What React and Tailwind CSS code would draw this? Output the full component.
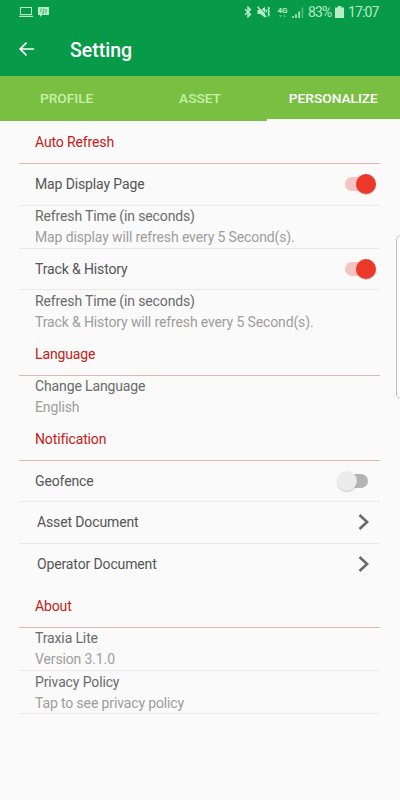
import { useState } from "react";

const tabs = ["PROFILE", "ASSET", "PERSONALIZE"];

function StatusBar() {
  return (
    <div className="flex h-6 items-center justify-between pl-[19px] pr-[21px] text-[#b5edc6]">
      <div className="flex items-center gap-[5px]">
        <svg width="14" height="10" viewBox="0 0 14 10" fill="none" stroke="currentColor">
          <rect x="1.5" y="0.5" width="11" height="7" />
          <path d="M0 9.4h14" strokeWidth="1.2" />
        </svg>
        <svg width="11" height="10" viewBox="0 0 11 10" fill="currentColor">
          <path d="M0 0h11v8H4L2 10V8H0z" />
          <path
            d="M2.4 2.3h1.4M5 2.3h1.4M7.5 3.1h1.4M2.1 4.2h1.4M4.7 4.2h1.4M4.4 6.1h1.4M7 5h1.4"
            stroke="#2f9c55"
            strokeWidth="1.1"
          />
        </svg>
      </div>
      <div className="flex items-center">
        <svg width="8" height="12" viewBox="0 0 8 12" fill="none" stroke="currentColor" strokeWidth="1.4">
          <path d="M1 3.2l5.5 5L4 10.8V1.2l2.5 2.6L1 8.8" />
        </svg>
        <svg className="ml-[5px]" width="13" height="12" viewBox="0 0 13 12">
          <path d="M0.5 4h2.8L8 1v10.5L3.3 8H0.5z" fill="currentColor" />
          <path d="M1.8 0l8.2 9.6" stroke="#079a49" strokeWidth="0.8" />
          <path
            d="M0.6 0.8l8.6 10.2M9.2 3.6v2.6M11.2 1l1 1.5-1 1.5 1 1.6-1 1.6 1 1.6-1 1.5"
            stroke="currentColor"
            strokeWidth="1.4"
            fill="none"
          />
        </svg>
        <div className="ml-[7px] flex w-[11px] flex-col items-center">
          <span className="text-[8px] leading-[7px] font-bold tracking-normal">4G</span>
          <svg width="7" height="4" viewBox="0 0 7 4" fill="currentColor" opacity="0.4">
            <path d="M0 1h3L1.5 4zM4 3h3L5.5 0z" />
          </svg>
        </div>
        <svg className="ml-[4px]" width="12" height="11" viewBox="0 0 12 11" fill="currentColor">
          <path d="M0.3 9h1.5v2H0.3zM3.2 7.2h1.6V11H3.2zM6.3 4.5h1.6V11H6.3z" />
          <path d="M9.5 0.5h1.8V11H9.5z" opacity="0.4" />
        </svg>
        <span className="ml-[4px] w-[24px] text-[14px] tracking-[-0.9px]">83%</span>
        <svg className="ml-[3px]" width="9" height="12" viewBox="0 0 9 12" fill="currentColor">
          <path d="M2.7 0h3.6v1.5H9V12H0V1.5h2.7z" />
        </svg>
        <span className="ml-[4px] w-[31px] text-[14px] tracking-[-0.9px]">17:07</span>
      </div>
    </div>
  );
}

function SectionTitle({ children }) {
  return (
    <h2 className="flex h-[43px] items-center border-b border-[#dfb9b0] px-4 pt-px text-[#c32017]">
      {children}
    </h2>
  );
}

function Switch({ on, onClick }) {
  return (
    <button
      className={`relative flex h-5 w-[31px] items-center ${on ? "justify-end" : "justify-start"}`}
      onClick={onClick}
    >
      <span
        className={`absolute h-[14px] w-[26px] rounded-full ${on ? "left-0 bg-[#f6c3c0]" : "right-0 bg-[#b4b4b4]"}`}
      />
      <span
        className={`relative size-5 rounded-full ${on ? "bg-[#eb3829]" : "bg-[#ececec]"} shadow-[0_1px_1px_rgba(0,0,0,0.2)]`}
      />
    </button>
  );
}

function SwitchRow({ label, initial, height }) {
  const [on, setOn] = useState(initial);

  return (
    <div
      className={`flex items-center justify-between border-b border-[#ebe9e9] pl-4 text-[#555] ${height} ${on ? "pr-1" : "pr-3"}`}
    >
      <span>{label}</span>
      <Switch on={on} onClick={() => setOn(!on)} />
    </div>
  );
}

function InfoRow({ title, detail, height = "h-[43px]", divider = true }) {
  return (
    <div className={`px-4 leading-[21px] ${height} ${divider ? "border-b border-[#ebe9e9]" : ""}`}>
      <p className="text-[#6b6b6b]">{title}</p>
      <p className="text-[#9d9d9d]">{detail}</p>
    </div>
  );
}

function LinkRow({ label, height, divider }) {
  return (
    <div
      className={`flex items-center justify-between pl-[18px] pr-[10px] text-[#555] ${height} ${divider ? "border-b border-[#ebe9e9]" : ""}`}
    >
      <span>{label}</span>
      <svg className="-mt-[2px]" width="12" height="16" viewBox="0 0 12 16" fill="none" stroke="#6a6a6a" strokeWidth="2.6">
        <path d="M1.5 1l7.6 7-7.6 7" />
      </svg>
    </div>
  );
}

export default function App() {
  const [activeTab, setActiveTab] = useState("PERSONALIZE");

  return (
    <div className="relative h-[800px] w-[400px] overflow-hidden bg-[#fafafa] font-['Roboto',sans-serif] text-[14px] tracking-[-0.13px]">
      <header className="h-[76px] bg-[#079a49]">
        <StatusBar />
        <div className="flex h-[50px] items-center pl-[19px] text-white">
          <svg width="15" height="14" viewBox="0 0 15 14" fill="none" stroke="currentColor" strokeWidth="1.7">
            <path d="M15 7H1.5M7.5 0.7L1.2 7l6.3 6.3" />
          </svg>
          <h1 className="ml-9 pt-[3px] text-[19.5px] font-medium tracking-normal">Setting</h1>
        </div>
      </header>

      <nav className="grid h-[45px] grid-cols-3 bg-[#79c042] text-[13.7px] font-medium tracking-normal">
        {tabs.map((tab) => (
          <button
            key={tab}
            className={`border-b-2 pt-[2px] ${activeTab === tab ? "border-[#fafafa] text-white" : "border-transparent text-[#c8f0a6]"}`}
            onClick={() => setActiveTab(tab)}
          >
            {tab}
          </button>
        ))}
      </nav>

      <main className="ml-[19px] w-[361px]">
        <SectionTitle>Auto Refresh</SectionTitle>
        <SwitchRow label="Map Display Page" initial={true} height="h-[42px] pb-px" />
        <InfoRow title="Refresh Time (in seconds)" detail="Map display will refresh every 5 Second(s)." />
        <SwitchRow label="Track & History" initial={true} height="h-[41px]" />
        <InfoRow
          title="Refresh Time (in seconds)"
          detail="Track & History will refresh every 5 Second(s)."
          height="h-[43px] pt-px"
          divider={false}
        />

        <SectionTitle>Language</SectionTitle>
        <InfoRow title="Change Language" detail="English" height="h-[42px]" divider={false} />

        <SectionTitle>Notification</SectionTitle>
        <SwitchRow label="Geofence" initial={false} height="h-[41px]" />
        <LinkRow label="Asset Document" height="h-[42px]" divider={true} />
        <LinkRow label="Operator Document" height="h-[41px]" divider={false} />

        <SectionTitle>About</SectionTitle>
        <InfoRow title="Traxia Lite" detail="Version 3.1.0" />
        <InfoRow title="Privacy Policy" detail="Tap to see privacy policy" height="h-[43px] pt-px" />
      </main>

      {/* edge panel handle */}
      <div className="absolute top-[235px] -right-[6px] h-[164px] w-[10px] rounded-[5px] border border-[#bdbdbd] bg-[#fdfdfd]" />
    </div>
  );
}
